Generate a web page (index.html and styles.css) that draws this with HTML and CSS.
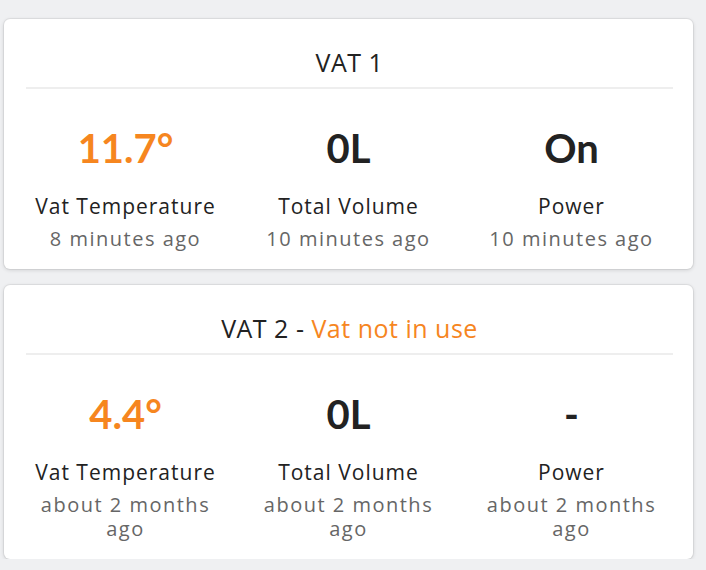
FILE: index.html
```html
<!DOCTYPE html>
<html lang="en">
<head>
<meta charset="utf-8">
<title>Vats</title>
<link rel="stylesheet" href="styles.css">
</head>
<body>
<div class="page">
  <section class="card">
    <h2 class="card-title">VAT 1</h2>
    <div class="stats">
      <div class="stat">
        <div class="value accent">11.7°</div>
        <div class="label">Vat Temperature</div>
        <div class="time">8 minutes ago</div>
      </div>
      <div class="stat">
        <div class="value">0L</div>
        <div class="label">Total Volume</div>
        <div class="time">10 minutes ago</div>
      </div>
      <div class="stat">
        <div class="value">On</div>
        <div class="label">Power</div>
        <div class="time">10 minutes ago</div>
      </div>
    </div>
  </section>
  <section class="card">
    <h2 class="card-title">VAT 2 - <span class="accent">Vat not in use</span></h2>
    <div class="stats">
      <div class="stat">
        <div class="value accent">4.4°</div>
        <div class="label">Vat Temperature</div>
        <div class="time">about 2 months<br>ago</div>
      </div>
      <div class="stat">
        <div class="value">0L</div>
        <div class="label">Total Volume</div>
        <div class="time">about 2 months<br>ago</div>
      </div>
      <div class="stat">
        <div class="value">-</div>
        <div class="label">Power</div>
        <div class="time">about 2 months<br>ago</div>
      </div>
    </div>
  </section>
</div>
</body>
</html>
```

FILE: styles.css
```css
html, body {
  margin: 0;
  padding: 0;
  background: #eff0f2;
}
body {
  font-family: "Open Sans", Lato, sans-serif;
  color: #222;
}
.page {
  padding: 19px 13px 0 4px;
  display: flex;
  flex-direction: column;
  gap: 16px;
}
.card {
  background: #fff;
  border-radius: 6px;
  box-shadow: 0 0 0 1px rgba(0,0,0,0.05), 0 1px 4px rgba(0,0,0,0.14);
  padding: 0 10px 18px;
}
.card-title {
  margin: 0 10px 0 12px;
  padding: 28px 0 10px;
  line-height: 30px;
  font-size: 25px;
  font-weight: 400;
  letter-spacing: 0.5px;
  text-align: center;
  border-bottom: 2px solid #eeeeee;
}
.accent { color: #f6861f; }
.stats {
  display: grid;
  grid-template-columns: 1fr 1fr 1fr;
  text-align: center;
  padding-top: 35px;
}
.value {
  font-family: Lato, "Open Sans", sans-serif;
  font-size: 40px;
  font-weight: 700;
  line-height: 48px;
}
.label {
  margin-top: 20px;
  font-size: 21px;
  line-height: 28px;
  letter-spacing: 1px;
}
.time {
  margin-top: 7px;
  font-size: 20px;
  line-height: 24px;
  letter-spacing: 1.5px;
  color: #666;
}
```
